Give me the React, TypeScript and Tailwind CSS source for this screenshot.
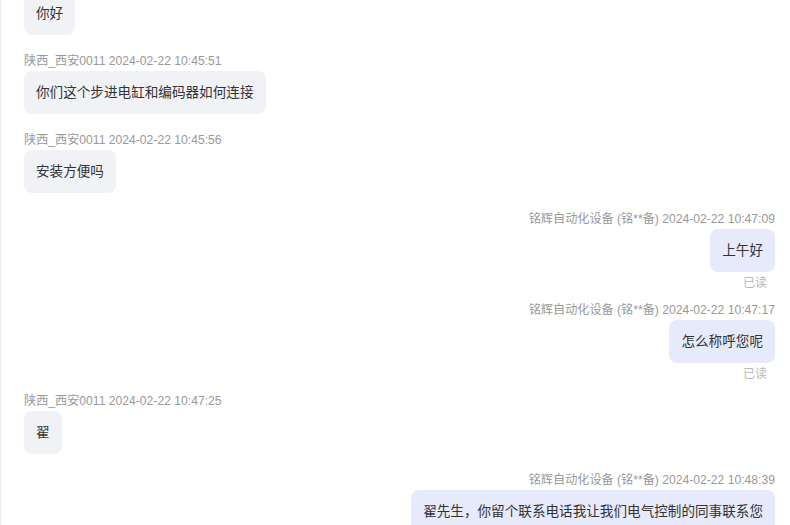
import React from "react";

type Msg = { side: "l" | "r"; meta: string; text: string; read?: boolean };

const msgs: Msg[] = [
  { side: "l", meta: "陕西_西安0011 2024-02-22 10:45:51", text: "你们这个步进电缸和编码器如何连接" },
  { side: "l", meta: "陕西_西安0011 2024-02-22 10:45:56", text: "安装方便吗" },
  { side: "r", meta: "铭辉自动化设备 (铭**备) 2024-02-22 10:47:09", text: "上午好", read: true },
  { side: "r", meta: "铭辉自动化设备 (铭**备) 2024-02-22 10:47:17", text: "怎么称呼您呢", read: true },
  { side: "l", meta: "陕西_西安0011 2024-02-22 10:47:25", text: "翟" },
  { side: "r", meta: "铭辉自动化设备 (铭**备) 2024-02-22 10:48:39", text: "翟先生，你留个联系电话我让我们电气控制的同事联系您" },
];

export default function App() {
  return (
    <div
      className="w-[790px] h-[525px] overflow-hidden bg-white border-l border-[#ececec]"
      style={{ fontFamily: '"Liberation Sans", "Noto Sans CJK SC", sans-serif' }}
    >
      <div className="flex flex-col pl-[23px] pr-[15px] -mt-2">
        <div className="flex flex-col items-start mb-[18px]">
          <div className="rounded-lg bg-[#f1f2f6] px-3 py-3 text-[13.6px] leading-[19px] text-[#333]">你好</div>
        </div>
        {msgs.map((m, i) => (
          <div
            key={i}
            className={
              "flex flex-col " +
              (m.side === "l" ? "items-start " : "items-end ") +
              (m.read ? "mb-[11px]" : "mb-[18px]")
            }
          >
            <div className="h-4 text-[12.15px] leading-4 text-[#999]">{m.meta}</div>
            <div
              className={
                "mt-[2px] rounded-lg px-3 py-3 text-[13.6px] leading-[19px] text-[#333] " +
                (m.side === "l" ? "bg-[#f1f2f6]" : "bg-[#e7eafb]")
              }
            >
              {m.text}
            </div>
            {m.read && <div className="mt-[3px] mr-2 h-4 text-[12px] leading-4 text-[#b8b8b8]">已读</div>}
          </div>
        ))}
      </div>
    </div>
  );
}
